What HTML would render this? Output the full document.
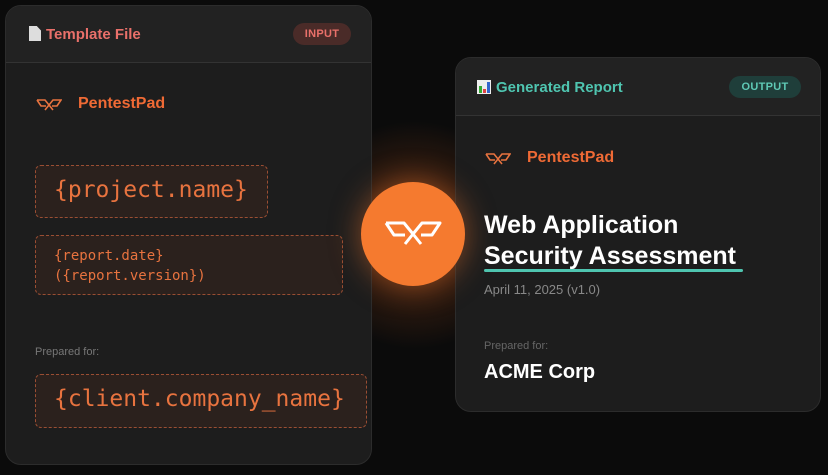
<!DOCTYPE html>
<html><head><meta charset="utf-8"><style>
*{margin:0;padding:0;box-sizing:border-box}
body{width:828px;height:475px;background:#0b0b0b;position:relative;overflow:hidden;font-family:"Liberation Sans",sans-serif}
.card{position:absolute;background:#1d1d1d;border-radius:16px;border:1px solid #2c2c2c;overflow:hidden}
.hdr{position:absolute;left:0;right:0;top:0;background:#222;border-bottom:1px solid #333}
.t{position:absolute;font-weight:bold;font-size:15px}
.pill{position:absolute;border-radius:12px;font-size:11px;font-weight:bold;text-align:center;line-height:22px;letter-spacing:.3px}
.logo{position:absolute;color:#ef6a35;font-weight:bold;font-size:16px}
.box{position:absolute;border:1.5px dashed #9a4e33;border-radius:6px;background:#2b211d;color:#e8733f;font-family:"DejaVu Sans Mono","Liberation Mono",monospace}
.lab{position:absolute;color:#777;font-size:11px}
</style></head><body>
<div style="position:absolute;left:300px;top:120px;width:230px;height:230px;border-radius:50%;background:radial-gradient(circle,rgba(240,110,40,.35),rgba(240,110,40,0) 70%)"></div>
<div style="position:absolute;left:330px;top:234px;width:160px;height:1px;background:rgba(240,110,60,.4)"></div>

<div class="card" style="left:5px;top:5px;width:367px;height:460px">
 <div class="hdr" style="height:57px"></div>
 <div class="t" style="left:23px;top:20px;color:#e9706a"><span style="display:inline-block;width:12px;height:15px;background:#ddd;vertical-align:-2px;margin-right:5px;clip-path:polygon(0 0,65% 0,100% 30%,100% 100%,0 100%)"></span>Template File</div>
 <div class="pill" style="left:287px;top:17px;width:58px;background:#4a2b28;color:#e9706a">INPUT</div>
 <svg style="position:absolute;left:30px;top:91px" width="26" height="14" viewBox="0 0 26 14"><path d="M1 3h8l4 5 4-5h8l-4 6h-5M13 8l-4 5M13 8l4 5M1 3l4 6h5" fill="none" stroke="#e8733f" stroke-width="1.6"/></svg>
 <div class="logo" style="left:72px;top:89px">PentestPad</div>
 <div class="box" style="left:29px;top:159px;width:233px;height:53px;font-size:23px;padding:11px 0 0 18px">{project.name}</div>
 <div class="box" style="left:29px;top:229px;width:308px;height:60px;font-size:14px;padding:10px 0 0 18px;line-height:20px">{report.date}<br>({report.version})</div>
 <div class="lab" style="left:29px;top:340px">Prepared for:</div>
 <div class="box" style="left:29px;top:368px;width:332px;height:54px;font-size:23px;padding:11px 0 0 18px">{client.company_name}</div>
</div>

<div class="card" style="left:455px;top:57px;width:366px;height:355px">
 <div class="hdr" style="height:58px"></div>
 <div class="t" style="left:21px;top:21px;color:#4fc5b0"><span style="display:inline-block;width:14px;height:14px;background:#eee;vertical-align:-2px;margin-right:5px;position:relative"><i style="position:absolute;left:2px;bottom:1px;width:3px;height:7px;background:#3a3"></i><i style="position:absolute;left:6px;bottom:1px;width:3px;height:4px;background:#d44"></i><i style="position:absolute;left:10px;bottom:1px;width:3px;height:11px;background:#36c"></i></span>Generated Report</div>
 <div class="pill" style="left:273px;top:18px;width:72px;background:#1f3e3a;color:#5fc9b5">OUTPUT</div>
 <svg style="position:absolute;left:29px;top:93px" width="26" height="14" viewBox="0 0 26 14"><path d="M1 3h8l4 5 4-5h8l-4 6h-5M13 8l-4 5M13 8l4 5M1 3l4 6h5" fill="none" stroke="#e8733f" stroke-width="1.6"/></svg>
 <div class="logo" style="left:71px;top:91px">PentestPad</div>
 <div style="position:absolute;left:28px;top:152px;color:#fff;font-weight:bold;font-size:25px;line-height:31px">Web Application<br>Security Assessment</div>
 <div style="position:absolute;left:28px;top:211px;width:259px;height:3px;background:#4fc5b0;border-radius:2px"></div>
 <div style="position:absolute;left:28px;top:224px;color:#888;font-size:13px">April 11, 2025 (v1.0)</div>
 <div class="lab" style="left:28px;top:282px;color:#666">Prepared for:</div>
 <div style="position:absolute;left:28px;top:303px;color:#fff;font-weight:bold;font-size:20px">ACME Corp</div>
</div>

<div style="position:absolute;left:361px;top:182px;width:104px;height:104px;border-radius:50%;background:#f57a2f;box-shadow:0 0 30px rgba(245,120,45,.5)"></div>
<svg style="position:absolute;left:384px;top:221px" width="58" height="26" viewBox="0 0 58 26"><path d="M2 2h18l9 11 9-11h18l-8 12h-11M29 13l-8 10M29 13l8 10M2 2l8 12h11" fill="none" stroke="#fff" stroke-width="3" stroke-linejoin="round"/></svg>
</body></html>
